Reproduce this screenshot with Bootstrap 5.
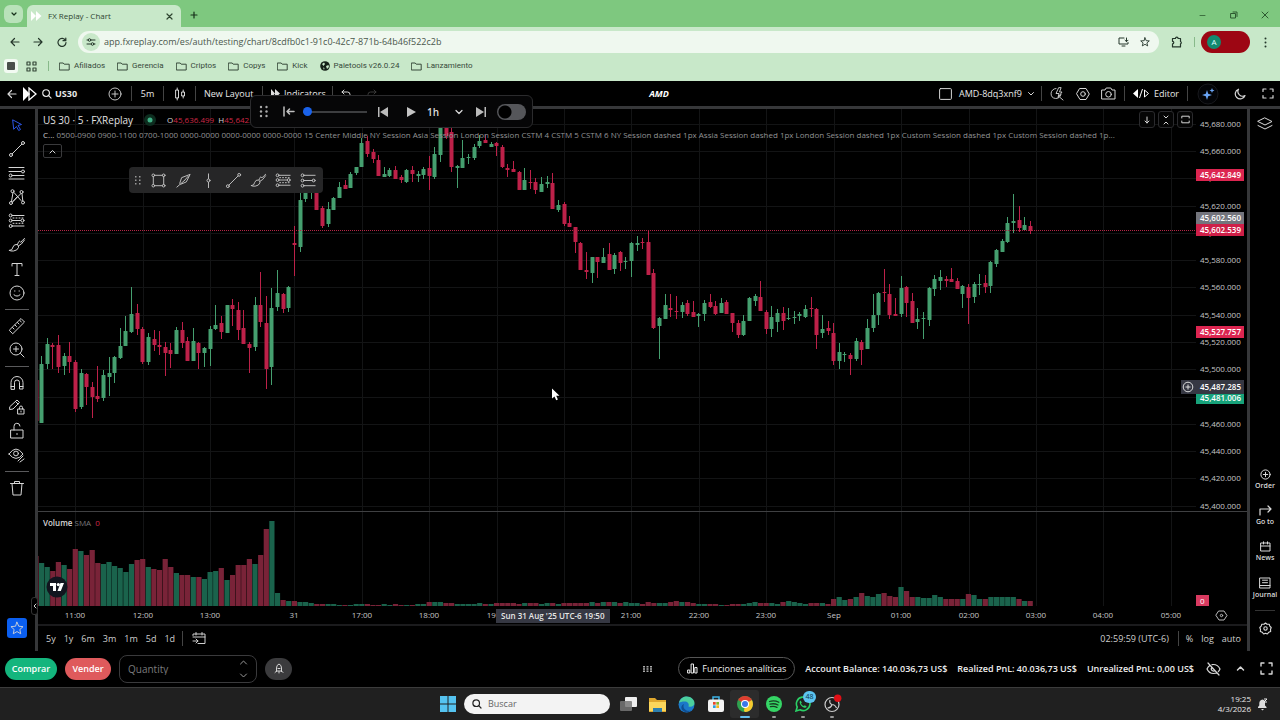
<!DOCTYPE html>
<html lang="es">
<head>
<meta charset="utf-8">
<meta name="viewport" content="width=device-width, initial-scale=1">
<title>FX Replay - Chart</title>
<link href="https://cdn.jsdelivr.net/npm/bootstrap@5.3.0/dist/css/bootstrap.min.css" rel="stylesheet">
<style>
:root{--edge:#363739;--rule:#3a3b3d;--ink:#d6d6d6;--soft:#8f9092;--up:#459f6f;--down:#bd2149}
html,body{background:#000}
body{font:400 8px/12px "Open Sans","Noto Sans",sans-serif;color:var(--ink);overflow-x:hidden}
button,input{font:inherit;color:inherit}
button{background:none;border:0;padding:0}
a{color:inherit;text-decoration:none}
svg{display:block;flex:none}
.ic{fill:none;stroke:currentColor;stroke-linecap:round;stroke-linejoin:round}
.cell{display:flex;align-items:center;justify-content:center;flex:none}
.w16{width:16px}.w20{width:20px}.w24{width:24px}.w26{width:26px}.w31{width:31px}.w32{width:32px}
.fs9{font-size:9px}.fs10{font-size:10px}
/* browser */
.tabs{height:27px;background:#7ec87f;color:#16301a}
.tabmenu{width:19px;height:18px;border-radius:6px;background:#b9e2ba}
.tab-on{width:154px;height:22px;background:#c8e8c9;border-radius:6px 6px 0 0;color:#2f4531}
.chrome{background:#c8e8c9;color:#24362a}
.urlbar{height:22px;border-radius:11px;background:#eff8ef}
.urlbar input{background:none;border:0;outline:0;padding:0;color:#4a574c;font-size:9px}
.site{width:18px;height:18px;border-radius:9px;background:#c8e8c9}
.profile{width:49px;height:22px;border-radius:11px;background:#9d0613}
.avatar{width:14px;height:14px;border-radius:7px;background:#13896f;color:#dff;font-size:8px}
.bar-v{width:1px;height:10px;background:#88b98a}
.marks{height:28px;padding-bottom:2px;font-family:Roboto,"Open Sans",sans-serif}
.marks a{color:#37493a}
/* app */
.apptop{height:28px;border-bottom:3px solid var(--edge);background:#000}
.sep{width:1px;height:15px;background:#444;flex:none}
.strong{font-weight:500;color:#e8e8e8}
.replay{left:250px;top:95px;width:283px;height:33px;background:#060607;border:1px solid #2b2b2d;border-radius:6px;z-index:5;color:#bfbfbf}
.replay input[type=range]{appearance:none;width:64px;height:9px;background:linear-gradient(#3d3e40,#3d3e40) center/100% 2px no-repeat;margin:0 4px 0 2px}
.replay input[type=range]::-webkit-slider-thumb{appearance:none;width:9px;height:9px;border-radius:5px;background:#1a62ea}
.flip{appearance:none;width:29px;height:16px;border-radius:8px;background:radial-gradient(circle at 8px 8px,#000 0 6px,transparent 7px) #55565a;margin:0}
.lefttools{width:38px;border-right:3px solid var(--edge)}
.lefttools button{width:34px;height:24px;display:flex;align-items:center;justify-content:center}
.lefttools hr,.righttools hr{height:1px;border:0;background:#5a5a5c;opacity:1;margin:4px 0 4px 5px;width:24px}
.righttools hr{width:20px;background:#333}
.starbtn{background:#0b5ff0;border-radius:3px;width:20px!important;height:20px!important;margin:auto 0 13px 7px}
.handle{left:31px;bottom:36px;width:7px;height:18px;background:#000;border:1px solid #333;border-radius:3px;z-index:3}
.righttools{width:33px;border-left:3px solid var(--edge)}
.righttools button{width:100%;height:36px;display:flex;flex-direction:column;align-items:center;color:#dadada;font-size:7px;line-height:9px;font-weight:600;gap:1px;padding-top:7px}
.plot{height:515px;overflow:hidden}
.axis{width:51px}
.plot text,.axis text{font-size:8px;fill:#c6c6c7}
.legend{left:5px;top:4px;right:62px}
.session{font-size:8px;color:#929395}
.redtx{color:#cf2847}
.foldbtn{width:19px;height:14px;border:1px solid #3a3a3c;border-radius:2px}
.chips{right:3px;top:2px;gap:3px}
.chips button{width:16px;height:17px;border:1px solid #2a2a2d;border-radius:3px;background:#050505;display:flex;align-items:center;justify-content:center}
.drawbar{left:91px;top:58px;width:194px;height:26px;background:#262627;border-radius:4px;color:#c4c4c4}
.tvlogo{left:8px;top:467px}
.pane{left:5px;top:408px}
.ranges{border-top:2px solid #1b1b1d;height:27px;font-size:9px;font-weight:500;color:#cfcfcf}
.trade{height:36px;padding:0 4px 1px 5px;font-size:9px}
.trade>span{color:#eee;font-weight:600}
.pill{height:22px;border-radius:11px;font-weight:600;color:#fff}
.qty{width:138px;height:28px;border:1px solid #3a3a3c;border-radius:8px}
.qty input{background:none;border:0;outline:0;width:90px;font-size:10px;padding:0}
.qty input::placeholder{color:#7b7b7d;opacity:1}
.ghost{height:23px;border:1px solid #555;border-radius:12px;width:117px}
.taskbar{height:33px;background:#202020;border-top:1px solid #3c3c3c}
.find{width:146px;height:20px;border-radius:10px;background:#f3f3f3;color:#222}
.find input{background:none;border:0;outline:0;width:100px;padding:0;font-size:9px}
.find input::placeholder{color:#666;opacity:1}
.app{width:29px;height:28px;display:flex;align-items:center;justify-content:center;position:relative}
.app::after{content:"";position:absolute;bottom:0;width:4px;height:2px;border-radius:1px;background:transparent}
.run::after{background:#999}
.act::after{background:#62bdec;width:10px}
.act{background:#2c2c2c;border-radius:3px}
</style>
</head>
<body>
<div class="d-flex flex-column min-vh-100 position-relative">
<header>
  <div class="tabs d-flex align-items-end">
    <button class="tabmenu cell ms-1 mb-1" aria-label="Buscar pestañas"><svg class="ic" width="8" height="8" viewBox="0 0 8 8" stroke-width="1.200"><path d="M2 3l2 2 2-2"/></svg></button>
    <div class="tab-on d-flex align-items-center ms-1 px-1">
      <svg width="11" height="10" viewBox="0 0 11 10" fill="#fff"><path d="M0 0l5 5-5 5z"/><path d="M5 0l5.500 5L5 10z"/></svg>
      <span class="flex-grow-1" style="margin-left:6px">FX Replay - Chart</span>
      <button class="cell w16" aria-label="Cerrar"><svg class="ic" width="7" height="7" viewBox="0 0 7 7" stroke-width="1.200"><path d="M1 1l5 5M6 1L1 6"/></svg></button>
    </div>
    <button class="cell w26 mb-2" aria-label="Nueva pestaña"><svg class="ic" width="8" height="8" viewBox="0 0 8 8" stroke-width="1.200"><path d="M4 1v6M1 4h6"/></svg></button>
    <div class="d-flex ms-auto mb-2 align-items-center" style="color:#2d5a30">
      <button class="cell w31" aria-label="Minimizar"><svg class="ic" width="7" height="7" viewBox="0 0 7 7" stroke-width=".8"><path d="M1 3.500h5"/></svg></button>
      <button class="cell w31" aria-label="Restaurar"><svg class="ic" width="8" height="8" viewBox="0 0 8 8"><path d="M1 2.500h4.500V7H1zM3 1h4v4.500"/></svg></button>
      <button class="cell w31" aria-label="Salir"><svg class="ic" width="8" height="8" viewBox="0 0 8 8"><path d="M1 1l6 6M7 1L1 7"/></svg></button>
    </div>
  </div>
  <div class="chrome">
    <div class="d-flex align-items-center pt-1 ps-1">
      <button class="cell" style="width:22px" aria-label="Atrás"><svg class="ic" width="10" height="10" viewBox="0 0 10 10" stroke-width="1.200"><path d="M9 5H1M4.500 1.500L1 5l3.500 3.500"/></svg></button>
      <button class="cell w24" aria-label="Adelante"><svg class="ic" width="10" height="10" viewBox="0 0 10 10" stroke-width="1.200"><path d="M1 5h8M5.500 1.500L9 5 5.500 8.500"/></svg></button>
      <button class="cell w24" aria-label="Recargar"><svg class="ic" width="10" height="10" viewBox="0 0 10 10" stroke-width="1.200"><path d="M8.500 3.500A4 4 0 1 0 9 5.500M8.800 1v2.700H6"/></svg></button>
      <div class="urlbar d-flex align-items-center flex-grow-1 ms-1" style="padding:0 4px">
        <span class="site cell"><svg class="ic" width="10" height="10" viewBox="0 0 10 10"><path d="M1 3h1M5.500 3H9M1 7h3.500M8 7h1"/><circle cx="3.500" cy="3" r="1.300"/><circle cx="6.500" cy="7" r="1.300"/></svg></span>
        <input class="flex-grow-1 ms-1" aria-label="Dirección" value="app.fxreplay.com/es/auth/testing/chart/8cdfb0c1-91c0-42c7-871b-64b46f522c2b">
        <button class="cell w24" aria-label="Instalar"><svg class="ic" width="11" height="10" viewBox="0 0 11 10"><path d="M6 1H1v6h9V5.500M4 9h3M8.500 1v3.500M7 3.200l1.500 1.500L10 3.200"/></svg></button>
        <button class="cell w20" aria-label="Favorito"><svg class="ic" width="10" height="10" viewBox="0 0 10 10" stroke-width=".9"><path d="M5 .8l1.200 2.900 3.100.2-2.400 2 .8 3L5 7.300 2.300 8.900l.8-3-2.400-2 3.100-.2z"/></svg></button>
      </div>
      <button class="cell w32" style="margin:0 1px 0 2px" aria-label="Extensiones"><svg class="ic" width="12" height="12" viewBox="0 0 12 12" stroke-width="1.200"><path d="M1.500 2.500h3a1.300 1.300 0 0 1 2.600 0h2.400v3a1.300 1.300 0 0 1 0 2.400v3h-8v-3a1.300 1.300 0 0 0 0-2.600z"/></svg></button>
      <span class="bar-v" style="margin-right:6px"></span>
      <button class="profile d-flex align-items-center px-2" style="padding-left:6px!important" aria-label="Perfil"><span class="avatar cell">A</span></button>
      <button class="cell w24" style="margin:0 3px" aria-label="Menú"><svg width="3" height="11" viewBox="0 0 3 11" fill="#24362a"><circle cx="1.500" cy="1.500" r="1"/><circle cx="1.500" cy="5.500" r="1"/><circle cx="1.500" cy="9.500" r="1"/></svg></button>
    </div>
    <nav class="marks d-flex align-items-center ps-1" id="marks">
      <span class="cell"><svg width="14" height="14" viewBox="0 0 14 14"><rect width="14" height="14" rx="3" fill="#f2faf2"/><rect x="3" y="3" width="8" height="8" rx="1" fill="#4a4f4b"/></svg></span>
      <a href="#" class="cell w26 me-1" aria-label="Aplicaciones"><svg class="ic" width="11" height="11" viewBox="0 0 11 11" stroke-width="1.200"><path d="M1 1h3v3H1zM7 1h3v3H7zM1 7h3v3H1zM7 7h3v3H7z"/></svg></a>
      <span class="bar-v" style="margin-right:7px"></span>
    </nav>
  </div>
</header>

<div class="apptop d-flex align-items-center">
  <button class="cell w20" style="margin-left:2px;margin-right:1px" aria-label="Volver"><svg class="ic" width="10" height="10" viewBox="0 0 10 10" stroke-width="1.200"><path d="M9 5H1M4.500 1.500L1 5l3.500 3.500"/></svg></button>
  <svg style="margin-right:5px" width="14" height="14" viewBox="0 0 14 14"><path d="M0 0l7 7-7 7z" fill="#fff"/><path d="M6 1l7 6-7 6z" fill="none" stroke="#fff" stroke-width="1.300"/></svg>
  <button class="d-flex align-items-center fs9 strong" style="width:60px"><svg class="ic" width="10" height="10" viewBox="0 0 11 11" stroke-width="1.200"><circle cx="4.500" cy="4.500" r="3.700"/><path d="M7.300 7.300L10 10"/></svg><span class="fw-bold" style="margin-left:3px">US30</span></button>
  <button class="cell w26" aria-label="Comparar"><svg class="ic" width="14" height="14" viewBox="0 0 14 14" stroke-width=".9"><circle cx="7" cy="7" r="6"/><path d="M7 4v6M4 7h6"/></svg></button>
  <span class="sep" style="margin-left:3px"></span><button class="cell w31 fs9 strong">5m</button>
  <span class="sep"></span><button class="cell w31" aria-label="Velas"><svg class="ic" width="12" height="14" viewBox="0 0 12 14"><path d="M2 3h2.500v8H2zM3.200 1v2M3.200 11v2M8 5h2.500v4H8zM9.200 3v2M9.200 9v2"/></svg></button>
  <span class="sep me-2"></span><button class="fs9 strong text-nowrap" style="width:58px;text-align:left">New Layout</button>
  <span class="sep"></span>
  <button class="d-flex align-items-center fs9 strong ps-2" style="width:69px"><svg width="9" height="9" viewBox="0 0 9 9" fill="#ddd"><path d="M0 0l4 4.500L0 9zM4 0l5 4.500L4 9z"/></svg><span class="ms-1">Indicators</span></button>
  <span class="sep"></span>
  <button class="cell w26" aria-label="Deshacer"><svg class="ic" width="10" height="9" viewBox="0 0 10 9"><path d="M3 1L1 3l2 2M1 3h5.500a2.500 2.500 0 0 1 0 5"/></svg></button>
  <button class="cell w26" aria-label="Rehacer" style="color:#3a3a3a"><svg class="ic" width="10" height="9" viewBox="0 0 10 9"><path d="M7 1l2 2-2 2M9 3H3.500a2.500 2.500 0 0 0 0 5"/></svg></button>
  <div class="flex-grow-1 text-center fs9 fst-italic fw-bold text-white">AMD</div>
  <button class="cell w26" aria-label="Diseño"><svg class="ic" width="13" height="12" viewBox="0 0 13 12"><rect x=".6" y=".6" width="11.800" height="10.800" rx="1"/></svg></button>
  <button class="fs9 strong">AMD-8dq3xnf9</button>
  <button class="cell" style="width:19px" aria-label="Más"><svg class="ic" width="8" height="6" viewBox="0 0 8 6"><path d="M1.500 1.500L4 4l2.500-2.500"/></svg></button>
  <span class="sep"></span>
  <button class="cell w31" aria-label="Búsqueda rápida"><svg class="ic" width="14" height="14" viewBox="0 0 14 14" stroke-width=".9"><path d="M6 1.500a5 5 0 1 0 5 6M9.500 10L13 13M8.500 1L6 6.500h3l-1 4L12 5H9.500L11 1z"/></svg></button>
  <button class="cell w20" aria-label="Ajustes"><svg class="ic" width="14" height="14" viewBox="0 0 14 14"><path d="M4 1.500h6L13.300 7 10 12.500H4L.7 7z"/><circle cx="7" cy="7" r="2.300"/></svg></button>
  <button class="cell w31" aria-label="Captura"><svg class="ic" width="15" height="13" viewBox="0 0 15 13"><path d="M1 3h3l1.200-2h4.600L11 3h3v9H1z"/><circle cx="7.500" cy="7.300" r="2.800"/></svg></button>
  <span class="sep me-1"></span>
  <button class="d-flex align-items-center fs9 strong mx-1"><svg class="me-1" width="17" height="9" viewBox="0 0 17 9"><path d="M5 0v9L0 4.500z" fill="#fff"/><path d="M9.500 0L6.500 9M11.500 1v7l4-3.500z" fill="none" stroke="#fff"/></svg>Editor</button>
  <span class="sep mx-1"></span>
  <button class="cell w32" aria-label="Asistente"><svg width="22" height="22" viewBox="0 0 22 22"><circle cx="11" cy="11" r="10" fill="#030407" stroke="#17181c"/><path d="M10 7l1.200 3.800L15 12l-3.800 1.200L10 17l-1.200-3.800L5 12l3.800-1.200z" fill="#6aa5f5"/><path d="M15 5l.7 1.800 1.800.7-1.800.7L15 10l-.7-1.800-1.800-.7 1.800-.7z" fill="#6aa5f5"/></svg></button>
  <button class="cell w32" aria-label="Tema"><svg class="ic" width="12" height="12" viewBox="0 0 12 12" stroke-width="1.200"><path d="M4.500 1.200A5 5 0 1 0 11 7.500 4.700 4.700 0 0 1 4.500 1.200z"/></svg></button>
  <button class="cell w24" aria-label="Pantalla completa"><svg class="ic" width="12" height="11" viewBox="0 0 12 11" stroke-width="1.200"><path d="M1 3.500V1h3M8 1h3v2.500M11 7.500V10H8M4 10H1V7.500"/></svg></button>
</div>

<div class="replay position-absolute d-flex align-items-center">
  <span class="cell w26"><svg width="10" height="13" viewBox="0 0 10 13" fill="#aaa"><circle cx="2" cy="2" r="1.200"/><circle cx="2" cy="6.500" r="1.200"/><circle cx="2" cy="11" r="1.200"/><circle cx="7.500" cy="2" r="1.200"/><circle cx="7.500" cy="6.500" r="1.200"/><circle cx="7.500" cy="11" r="1.200"/></svg></span>
  <button class="cell w24" aria-label="Ir al inicio"><svg class="ic" width="12" height="11" viewBox="0 0 12 11" stroke-width="1.500"><path d="M1 1v9M11 5.500H4M6.500 3L4 5.500 6.500 8"/></svg></button>
  <input type="range" aria-label="Velocidad" min="0" max="100" value="0">
  <button class="cell w24" aria-label="Anterior"><svg width="10" height="10" viewBox="0 0 10 10" fill="#bbb"><path d="M0 0h1.500v10H0zM10 0v10L2 5z"/></svg></button>
  <button class="cell w32" aria-label="Reproducir"><svg width="9" height="10" viewBox="0 0 9 10" fill="#c4c4c4"><path d="M0 0v10l9-5z"/></svg></button>
  <button class="d-flex align-items-center justify-content-between fs10 fw-semibold" style="width:36px;color:#ddd">1h<svg class="ic" width="8" height="6" viewBox="0 0 8 6" stroke-width="1.200"><path d="M1 1.500l3 3 3-3"/></svg></button>
  <button class="cell w32" style="margin-left:2px" aria-label="Siguiente"><svg width="10" height="10" viewBox="0 0 10 10" fill="#bbb"><path d="M8.500 0H10v10H8.500zM0 0v10l8-5z"/></svg></button>
  <input type="checkbox" class="flip" aria-label="Modo">
</div>

<main class="d-flex flex-grow-1 position-relative">
  <aside class="lefttools d-flex flex-column pt-1 flex-shrink-0" id="tools"></aside>
  <div class="handle position-absolute cell"><svg class="ic" width="4" height="6" viewBox="0 0 4 6" stroke-width="1"><path d="M3 1L1 3l2 2"/></svg></div>

  <section class="d-flex flex-column flex-grow-1" style="min-width:0">
    <div class="d-flex">
      <div class="plot position-relative flex-grow-1" style="min-width:0">
        <svg id="chart" width="100%" height="515"></svg>
        <div class="legend position-absolute">
          <div class="d-flex align-items-center" style="height:13px">
            <span class="fs10" style="color:#e2e2e2;font-weight:500">US 30 · 5 · FXReplay</span>
            <svg style="margin-left:11px" width="12" height="12" viewBox="0 0 12 12"><circle cx="6" cy="6" r="6" fill="#0d2d1f"/><circle cx="6" cy="6" r="2.500" fill="#3fae84"/></svg>
            <span class="ms-2" style="padding-left:3px">O<span class="redtx">45,636.499</span>&nbsp; H<span class="redtx">45,642.849</span></span>
          </div>
          <div class="session text-nowrap text-truncate" style="line-height:11px;margin-top:3px"><span style="color:#ccc">C...</span>&nbsp;0500-0900 0900-1100 0700-1000 0000-0000 0000-0000 0000-0000 15 Center Middle NY Session Asia Session London Session CSTM 4 CSTM 5 CSTM 6 NY Session dashed 1px Assia Session dashed 1px London Session dashed 1px Custom Session dashed 1px Custom Session dashed 1p...</div>
          <button class="foldbtn cell mt-1" aria-label="Plegar"><svg class="ic" width="7" height="5" viewBox="0 0 7 5"><path d="M1 4l2.500-2.500L6 4"/></svg></button>
        </div>
        <div class="chips position-absolute d-flex">
          <button aria-label="Bajar"><svg class="ic" width="8" height="8" viewBox="0 0 8 8"><path d="M4 1v6M2 5l2 2 2-2"/></svg></button>
          <button aria-label="Plegar panel"><svg class="ic" width="8" height="10" viewBox="0 0 8 10" stroke-width="1"><path d="M2 1l2 2 2-2M2 9l2-2 2 2"/></svg></button>
          <button aria-label="Maximizar"><svg class="ic" width="9" height="9" viewBox="0 0 9 9" stroke-width="1"><path d="M.8 3V1.200h7.400V3M.8 6v1.800h7.400V6"/></svg></button>
        </div>
        <div class="drawbar position-absolute d-flex align-items-center" id="drawbar"></div>
        <div class="pane position-absolute"><span class="fw-semibold">Volume</span> <span style="color:#77787a">SMA</span>&nbsp; <span class="redtx">0</span></div>
        <svg class="tvlogo position-absolute" width="22" height="22" viewBox="0 0 22 22"><circle cx="11" cy="11" r="10.500" fill="#12151f"/><path d="M4 7h6v8H7v-5H4zM14.500 7H18l-3.200 8h-3.300z" fill="#fff"/><circle cx="12.300" cy="8.600" r="1.600" fill="#fff"/></svg>
      </div>
      <svg id="axis" class="axis" height="515"></svg>
    </div>
    <div class="ranges d-flex align-items-center">
      <div class="d-flex ps-2" id="rg"></div>
      <span class="sep" style="margin-left:7px"></span>
      <button class="cell w31" aria-label="Ir a fecha"><svg class="ic" width="14" height="13" viewBox="0 0 14 13" stroke-width="1"><path d="M1 3.500V2h12v9.500H6M1 5h12M4 .5V3M10 .5V3M1 9h5M4 7l2 2-2 2"/></svg></button>
      <span class="ms-auto" style="margin-right:9px">02:59:59 (UTC-6)</span><span class="sep"></span>
      <button style="margin-left:7px">%</button><button style="margin-left:8px">log</button><button style="margin:0 6px 0 8px">auto</button>
    </div>
  </section>

  <aside class="righttools d-flex flex-column flex-shrink-0">
    <button aria-label="Capas" style="height:30px;padding-top:8px"><svg class="ic" width="16" height="14" viewBox="0 0 16 14"><path d="M8 1l7 3.500L8 8 1 4.500zM1 8.500L8 12l7-3.500"/></svg></button>
    <div class="mt-auto">
    <button><svg class="ic" width="11" height="11" viewBox="0 0 11 11" stroke-width="1"><circle cx="5.500" cy="5.500" r="4.600"/><path d="M5.500 3.300v4.400M3.300 5.500h4.400"/></svg>Order</button>
    <button><svg class="ic" width="13" height="11" viewBox="0 0 13 11" stroke-width="1.200"><path d="M1 10V4h11M9 1l3 3-3 3"/></svg>Go to</button>
    <button><svg class="ic" width="11" height="11" viewBox="0 0 11 11" stroke-width="1"><path d="M1 2h9v8H1zM1 5h9M3.500 .8V3M7.500 .8V3"/></svg>News</button>
    <button><svg class="ic" width="12" height="12" viewBox="0 0 12 12" stroke-width="1"><path d="M1 1h10v10H1zM1 8.500h10M3.500 3.200h5M3.500 5.700h5"/></svg>Journal</button>
    <hr>
    <button aria-label="Configuración"><svg class="ic" width="13" height="13" viewBox="0 0 13 13" stroke-width="1.100"><path d="M6.500 1l1.500 1.200 2.200 0 .6 2 1.400 1.300L11.500 7.500l.2 2-2 .8L8.300 12l-1.800-.8-1.800.8-1.400-1.700-2-.8.2-2L.8 5.500l1.400-1.300.6-2 2.200 0z"/><circle cx="6.500" cy="6.500" r="1.700"/></svg></button>
    </div>
  </aside>
</main>

<div class="trade d-flex align-items-center">
  <button class="pill cell" style="width:52px;background:#14b57d">Comprar</button>
  <button class="pill cell ms-2" style="width:46px;background:#df5a5c">Vender</button>
  <div class="qty d-flex align-items-center justify-content-between ms-2 px-2"><input aria-label="Quantity" placeholder="Quantity"><svg class="ic" width="9" height="20" viewBox="0 0 9 20" style="color:#999"><path d="M1.500 5l3-3 3 3M1.500 15l3 3 3-3"/></svg></div>
  <button class="cell ms-2" style="width:27px;height:22px;border-radius:11px;background:#3b3b3d" aria-label="Alerta"><svg class="ic" width="10" height="11" viewBox="0 0 10 11"><path d="M2.500 8.500V5Q2.500 2 5 1q2.500 1 2.500 4v3.500M1 9.500l1.500-1.500h5L9 9.500M5 8.500v1.500M4 5.500h2"/></svg></button>
  <span class="cell ms-auto"><svg width="9" height="6" viewBox="0 0 9 6" fill="#aaa"><path d="M0 0h2v1.500H0zM3.500 0h2v1.500h-2zM7 0h2v1.500H7zM0 2.300h2v1.500H0zM3.500 2.300h2v1.500h-2zM7 2.300h2v1.500H7zM0 4.500h2V6H0zM3.500 4.500h2V6h-2zM7 4.500h2V6H7z"/></svg></span>
  <button class="ghost cell" style="margin-left:26px;color:#eee"><svg class="ic me-1" width="11" height="11" viewBox="0 0 11 11" stroke-width="1"><path d="M1 7h1.800v3H1zM4.500 1h2v9h-2zM8.200 4.500H10V10H8.200z"/></svg>Funciones analíticas</button>
  <span style="margin-left:10px">Account Balance: 140.036,73 US$</span>
  <span style="margin-left:10px">Realized PnL: 40.036,73 US$</span>
  <span style="margin-left:10px">Unrealized PnL: 0,00 US$</span>
  <button class="cell ms-2" style="width:23px" aria-label="Ocultar"><svg class="ic" width="15" height="14" viewBox="0 0 15 14" stroke-width="1.200"><path d="M2 1l11 12M4 3.200Q2 4.500 1 7q2 4.500 6.500 4.500 1.800 0 3.300-1M6 2.600Q11.500 1.800 14 7q-.6 1.500-1.700 2.600M6 5.500a2 2 0 0 0 2.800 3"/></svg></button>
  <button class="cell w31" aria-label="Expandir"><svg class="ic" width="9" height="7" viewBox="0 0 9 7" stroke-width="1.500"><path d="M1.500 5l3-3 3 3"/></svg></button>
  <button class="cell w20" aria-label="Pantalla completa"><svg class="ic" width="13" height="13" viewBox="0 0 13 13" stroke-width="1.400"><path d="M1 4V1h3M9 1h3v3M12 9v3H9M4 12H1V9"/></svg></button>
</div>

<footer class="taskbar d-flex align-items-center position-relative">
  <div class="d-flex align-items-center mx-auto" style="padding-left:6px">
    <button class="cell me-2" aria-label="Inicio"><svg width="16" height="16" viewBox="0 0 16 16" fill="#55c3f0"><path d="M0 0h7.500v7.500H0zM8.500 0H16v7.500H8.500zM0 8.500h7.500V16H0zM8.500 8.500H16V16H8.500z"/></svg></button>
    <label class="find d-flex align-items-center px-2"><svg class="ic" style="margin-right:6px" width="10" height="10" viewBox="0 0 10 10" stroke-width="1.200"><circle cx="4.200" cy="4.200" r="3.300"/><path d="M6.700 6.700L9 9"/></svg><input placeholder="Buscar" aria-label="Buscar"></label>
    <button class="app ms-1" aria-label="Vista de tareas"><svg width="17" height="15" viewBox="0 0 17 15"><rect x="5" width="12" height="10" rx="1" fill="#eee"/><rect y="4" width="12" height="10" rx="1" fill="#777" opacity=".85"/></svg></button>
    <button class="app" aria-label="Archivos"><svg width="17" height="15" viewBox="0 0 17 15"><path d="M0 1h6l2 2h9v12H0z" fill="#e0a82e"/><path d="M0 5h17v9H0z" fill="#fbd65b"/><path d="M4 11h9v4H4z" fill="#2d7fae"/></svg></button>
    <button class="app" aria-label="Edge"><svg width="17" height="17" viewBox="0 0 17 17"><circle cx="8.500" cy="8.500" r="8" fill="#1b78c9"/><path d="M1 7C2 2 6 .5 8.500.5c5 0 8 3.500 8 6.500 0 3-3 4.500-6 3.500 1-3-1-5-4-5C4 5.500 2 6 1 7z" fill="#4ccf9d"/><path d="M6 8c-2 4 2 8 7 6.500-2 2-5 2.200-7 1C2 13 3 9 6 8z" fill="#0f4f93"/></svg></button>
    <button class="app" aria-label="Tienda"><svg width="16" height="16" viewBox="0 0 16 16"><path d="M5 4V1h6v3" fill="none" stroke="#3bb2e6" stroke-width="1.500"/><rect y="3.500" width="16" height="12.500" rx="2" fill="#f3f3f3"/><path d="M5 6h2.700v2.700H5z" fill="#e8492b"/><path d="M8.300 6H11v2.700H8.300z" fill="#7db72f"/><path d="M5 9.300h2.700V12H5z" fill="#2a9fe0"/><path d="M8.300 9.300H11V12H8.300z" fill="#f6b71b"/></svg></button>
    <button class="app act" aria-label="Chrome"><svg width="16" height="16" viewBox="0 0 16 16"><circle cx="8" cy="8" r="8" fill="#2fa24f"/><path d="M8 8L1.100 4A8 8 0 0 1 14.900 4z" fill="#df3e30"/><path d="M8 8l6.900-4A8 8 0 0 1 8 16l-1-1z" fill="#f8c92f"/><circle cx="8" cy="8" r="4" fill="#fff"/><circle cx="8" cy="8" r="3" fill="#3a77e8"/></svg></button>
    <button class="app run" aria-label="Spotify"><svg width="16" height="16" viewBox="0 0 16 16"><circle cx="8" cy="8" r="8" fill="#35d565"/><path d="M3.500 5.500q5-1.500 9.300.8M4 8.200q4.200-1.200 8 .8M4.500 10.700q3.500-1 6.500.7" fill="none" stroke="#173d22" stroke-width="1.300" stroke-linecap="round"/></svg></button>
    <button class="app run" aria-label="WhatsApp"><svg width="16" height="16" viewBox="0 0 16 16"><path d="M1 15l1.200-4A6.800 6.800 0 1 1 5 13.800z" fill="none" stroke="#2ad066" stroke-width="1.600"/><path d="M5.500 4.500l1.300 2-.8 1q1 2 2.800 2.600l1-.9 1.900 1.200q-.5 1.800-2.300 1.400Q5.500 10.500 4.600 6.500q0-1.500.9-2z" fill="#2ad066"/></svg><span class="position-absolute rounded-pill text-center" style="right:1px;top:1px;width:13px;height:12px;background:#5cc4f0;color:#0b3448;font-size:7px;line-height:12px">48</span></button>
    <button class="app run" aria-label="OBS"><svg width="20" height="20" viewBox="0 0 20 20"><circle cx="10" cy="10.500" r="7" fill="#1c1c1c" stroke="#ccc" stroke-width="1.200"/><path d="M10 10.500q-3-1-2-4.500M10 10.500q3 0 4.500 3.500M10 10.500q-1 3.500-4.500 3.500" fill="none" stroke="#ccc" stroke-width="1.200"/><circle cx="15.700" cy="4.200" r="3.700" fill="#e00f16"/></svg></button>
  </div>
  <div class="position-absolute end-0 d-flex align-items-center pe-2" style="color:#e8e8e8;padding-right:12px!important"><div class="text-end" style="line-height:10px;margin-right:6px">19:25<br>4/3/2026</div><svg width="11" height="13" viewBox="0 0 11 13"><path d="M1 10V9l1.300-1.500V5Q2.500 2 5.500 1.500 7 1.600 8 3v4.500L9.500 9v1z" fill="#ddd"/><path d="M4 11h3l-1.500 1.500z" fill="#ddd"/><path d="M7 1h3L7 4h3" stroke="#eee" fill="none"/></svg></div>
</footer>
</div>

<script src="https://cdn.jsdelivr.net/npm/bootstrap@5.3.0/dist/js/bootstrap.bundle.min.js"></script>
<script>
const icon=(d,w=1,s=18)=>`<svg class="ic" width="${s}" height="${s}" viewBox="0 0 18 18" stroke-width="${w}">${d}</svg>`;
const c=(x,y,r=1.500)=>`<circle cx="${x}" cy="${y}" r="${r}"/>`;
const P=d=>`<path d="${d}"/>`;
const I={
 cursor:`<g style="color:#2c55e6" stroke="#2c55e6">${P('M5 4l8.500 4.500-3.500 1 2.500 4-1.800 1-2.300-4L6 13z')}</g>`,
 line:P('M4.200 13.800l9.600-9.600')+c(3,15)+c(15,3),
 fib:P('M1 3.500h15M1 7.500h12M4.500 11.500H16M1 15h15')+c(15,7.500)+c(2.700,11.500),
 patt:P('M3.500 13.500L5 4.500M6 4.500l7 8M5 13.500l8-8M14 5.500l.8 7.500M4.500 14L9 9')+c(4.500,3.200)+c(13.500,4)+c(3,15)+c(15,14.500),
 proj:P('M4.500 3.500H16M4.500 8.500h8M4.500 14H16')+c(2.700,3.500)+c(2.700,8.500)+c(14.500,8.500)+c(2.700,14)+`<path d="M5 6h11M5 11.300h11" stroke-dasharray="1 2"/>`,
 proj2:P('M4.500 3.500H16M4.500 9h8.500M4.500 14.500H16')+c(2.700,3.500)+c(2.700,9)+c(14.500,9)+c(2.700,14.500),
 brush:P('M1.500 14.500q3 0 3.500-3.500 1-3 4-2.500 2 1 1.500 3-1 3-5 3.500-3 .3-4-.5zM9.500 8.500Q11 4 12 5.500t1 .5q1-1.500 3.500-3.500M10.500 10q3-1 6-6'),
 text:P('M4 6V3.500h10V6M9 3.500v12M7 15.500h4'),
 face:c(9,9,7)+P('M6 10.800q3 2.800 6 0M6.800 6.800v.4M11.200 6.800v.4'),
 ruler:P('M1.500 13L13 1.500 16.500 5 5 16.500zM4.500 10.500l1.500 1.500M7 8l1.500 1.500M9.500 5.500L11 7M12 3.500L13.200 5'),
 zoom:c(8,8,6)+P('M12.500 12.500L16 16M8 5.500v5M5.500 8h5'),
 magnet:P('M3 15V8.500a6 6 0 0 1 12 0V15h-3.500V8.500a2.500 2.500 0 0 0-5 0V15zM3 12.500h3.500M11.500 12.500H15'),
 penlock:P('M2 8.500L9 2l2.500 2.500L5 11l-3 .5zM7.500 3.500L10 6M10 11h6v5h-6zM11.500 11V9.500a1.500 1.500 0 0 1 3 0V11M13 13v1'),
 lock:P('M3 8h12v8H3zM6 8V4.500a3 3 0 0 1 6-.5M9 11.500v1'),
 eye:P('M1 8q7-10 14 0-7 9-14 0zM10 15l5-5M12 16l4-3')+c(8,7.500,2.400),
 trash:P('M2.500 4.500h13M6.500 4.500v-2h5v2M4 4.500L5 16h8l1-11.500'),
 star:P('M9 2.500l2 4.500 4.800.5-3.600 3.200 1 4.800L9 13l-4.200 2.500 1-4.800L2.200 7.500 7 7z'),
 box:P('M5 3.500h8M5 14.500h8M3.500 5v8M14.500 5v8')+c(3.500,3.500,1.400)+c(14.500,3.500,1.400)+c(3.500,14.500,1.400)+c(14.500,14.500,1.400),
 arrow:P('M2 16l8-7M5 12l2-6 9-3.500-4 8-6 2.500M10 9l4-4.500'),
 cross:P('M9 2v5M9 11v5.500')+c(9,9,1.600)
};
document.getElementById('tools').innerHTML=['cursor','line','fib','patt','proj','brush','text','face','-','ruler','zoom','-','magnet','penlock','lock','eye','-','trash']
 .map(n=>n==='-'?'<hr>':`<button aria-label="${n}">${icon(I[n])}</button>`).join('')+`<button class="starbtn" aria-label="star">${icon(I.star,1,16)}</button>`;
document.getElementById('drawbar').innerHTML=`<svg style="margin:0 4px 0 6px" width="7" height="9" viewBox="0 0 7 9" fill="#999"><path d="M0 0h1.500v1.500H0zM4 0h1.500v1.500H4zM0 3.500h1.500V5H0zM4 3.500h1.500V5H4zM0 7h1.500v1.500H0zM4 7h1.500v1.500H4z"/></svg>`+
 ['box','arrow','cross','line','brush','proj','proj2'].map(n=>`<button class="cell" style="width:25px" aria-label="${n}">${icon(I[n],1,17)}</button>`).join('');
document.getElementById('rg').style.gap='8px';
document.getElementById('rg').innerHTML=['5y','1y','6m','3m','1m','5d','1d'].map(t=>`<button>${t}</button>`).join('');
document.getElementById('marks').insertAdjacentHTML('beforeend',['Afiliados','Gerencia','Criptos','Copys','Kick','Paletools v26.0.24','Lanzamiento'].map(t=>
 `<a href="#" class="d-flex align-items-center text-nowrap" style="margin:0 9px 0 3px">${t[0]==='P'
 ?'<svg width="10" height="10" viewBox="0 0 10 10"><circle cx="5" cy="5" r="4.800" fill="#152018"/><path d="M2 3l2-1.500L5 3 3.500 5zM6 5l2.500-1L9 6 7 8zM3 6.500l1.500.5L4 9z" fill="#c8e8c9"/></svg>'
 :'<svg class="ic" width="11" height="9" viewBox="0 0 11 9" stroke-width="1"><path d="M.7 1h3.500l1 1.200h5V8H.7z"/></svg>'}<span style="margin-left:4px">${t}</span></a>`).join(''));

/* one row per 5-minute bar: colour, high, body top, body bottom, low (screen rows) */
const bars=`r380,380,421,421 g356,364,423,423 g338,344,364,369 r343,345,347,369 r335,345,367,373 g353,356,366,375 r342,356,362,373
r360,362,409,412 g369,373,407,409 r373,374,387,405 r382,387,397,418 r366,396,399,402 g370,375,398,401 g357,373,377,396 g356,357,373,383 g328,346,358,359 g316,331,346,346 g287,314,332,333 r304,313,329,335
r327,329,362,364 g333,337,362,365 r330,339,345,351 r331,345,347,355 r342,347,353,376 r343,350,354,368 g327,330,354,354 r322,330,343,348 r337,341,361,361 g328,341,361,361 r342,343,353,369 g347,348,353,367
g326,329,349,366 g305,325,329,330 r316,323,332,339 g305,305,333,333 r299,305,309,326 r302,310,330,340 r310,328,344,344 r342,344,348,373 g297,305,347,351 r272,305,322,327 r296,323,369,389 g288,308,367,385 g270,293,307,311 r293,294,309,313 g286,287,308,312
r226,243,245,276 g190,200,247,252 g188,190,199,202 g180,186,192,199 r180,186,210,210 r206,208,226,228 g202,209,224,227 g197,198,210,210 g182,187,198,198 r180,185,189,189 g172,174,188,188 g167,167,173,175
g138,143,167,167 r136,141,154,157 r149,152,159,163 r155,160,176,176 g167,174,177,177 g168,170,176,177 r166,170,179,179 r175,177,180,183 g169,170,182,183 r166,170,174,182 g171,174,176,182 g167,169,175,179
r156,168,176,190 g147,154,177,179 g120,125,155,162 r120,125,136,139 r128,132,167,172 g165,166,168,188 g140,158,168,168 g154,157,158,164 g144,147,158,160 g135,141,146,148 r135,140,143,143 g142,144,147,147 r142,143,146,156 r145,147,167,168 r164,168,170,177
r161,169,172,172 r171,172,190,190 g168,180,190,190 r170,182,183,189 r178,182,190,194 g177,184,192,192 g176,182,184,188 r173,183,209,209 g200,205,210,212 r202,204,224,226 r216,223,227,227 r227,227,242,253 r242,243,270,270 r252,270,272,279 g257,257,273,283 r257,257,262,278 g248,257,263,263
r243,254,270,270 g253,255,269,274 r251,252,263,271 g257,261,262,269 g242,243,261,277 g236,243,245,251 r238,242,243,249 r231,242,275,275 r269,273,328,329 g317,318,326,359 g294,305,319,319 r294,308,310,317 r296,311,312,319 g302,305,312,318 r300,303,314,316 r301,312,317,317
g313,314,316,327 g300,303,314,321 r294,302,307,308 r301,306,314,315 g298,303,313,313 r300,302,314,314 r313,313,323,332 r320,323,335,338 g315,321,335,336 g297,298,321,321 g294,296,301,306 r281,297,311,311 r310,312,329,334 g306,317,329,337 g309,313,322,332 r307,313,321,330 g308,318,319,320
g311,317,318,324 g312,314,316,321 g305,309,317,318 r297,308,309,317 r308,309,335,349 g315,329,333,338 r321,328,331,335 r323,333,361,365 g343,352,361,369 g352,354,355,362 r353,355,359,375 g338,341,359,361 r340,342,350,365 g319,328,349,349 g294,315,328,332 g292,293,315,325 r269,292,293,302
r284,294,315,319 r298,314,316,316 g276,288,314,317 r286,287,303,317 r293,301,323,323 g308,319,322,329 g312,318,319,339 g287,288,320,326 g275,279,289,296 g270,277,281,290 r276,279,281,287 r268,279,282,282 r278,281,289,289 g285,286,294,308 r284,287,298,324 g282,284,297,303 g274,284,285,295 r275,283,287,293
g261,262,286,293 g249,250,264,267 g239,241,252,252 g217,223,242,243 g194,221,223,233 r206,220,228,232 g217,225,230,230 r221,226,231,234`.trim().split(/\s+/);
const vol=[50,43,39,35,44,41,37,57,55,51,56,43,42,44,40,38,34,42,46,47,39,37,36,47,39,33,31,31,29,29,27,34,35,38,26,31,41,41,47,42,51,77,85,13,6,5,
5,4,4,3,2,2,2,2,1,1,1,2,2,2,1,1,2,1,2,1,1,1,2,2,4,4,4,3,3,2,2,2,2,3,2,2,3,3,3,3,2,3,3,3,2,3,3,2,3,3,3,3,3,4,3,4,4,4,3,4,3,3,2,4,3,3,3,4,5,4,4,3,2,2,2,2,1,1,2,2,2,3,4,3,3,3,2,4,5,4,3,2,3,3,3,2,
7,9,6,7,9,13,10,9,12,13,10,9,19,15,9,9,8,8,11,9,7,7,7,7,12,11,7,7,9,9,9,9,9,7,5,5];
const STEP=5.617,X0=75.4-38,TOP=109,BASE=497,GRID='#131415';
const X=k=>X0+STEP*k;
const hours=[['11:00',0],['12:00',12],['13:00',24],['31',39],['17:00',51],['18:00',63],['19:00',75],['',87],['21:00',99],['22:00',111],['23:00',123],['Sep',135],['01:00',147],['02:00',159],['03:00',171],['04:00',183],['05:00',195]];
let s='';
for(const[,k]of hours)s+=`<path d="M${Math.round(X(k))+.5} 0V${BASE}" stroke="${GRID}"/>`;
for(let i=0;i<15;i++)s+=`<rect y="${Math.round(14.7+27.28*i)}" width="100%" height="1" fill="${GRID}"/>`;
const off=vol.length-bars.length;
bars.forEach((b,i)=>{
 const up=b[0]==='g',[h,t,d,l]=b.slice(1).split(',').map(Number),x=X(i-7),col=up?'var(--up)':'var(--down)';
 const v=vol[i<135?i:i+off]||3;
 s+=`<rect x="${(x-2.700).toFixed(1)}" y="${BASE-v}" width="5.200" height="${v}" fill="${up?'#1a634c':'#792338'}"/>`;
 s+=`<rect x="${Math.round(x-.5)}" y="${h-TOP}" width="1" height="${Math.max(1,l-h)}" fill="${col}"/><rect x="${Math.round(x-.5)-1.500}" y="${t-TOP}" width="4" height="${Math.max(1,d-t)}" rx=".5" fill="${col}"/>`;
});
s+=`<line x1="0" x2="100%" y1="121.500" y2="121.500" stroke="#b52545" stroke-dasharray="1 1"/>`;
s+=`<rect x="0" y="402" width="100%" height="1" fill="#3f4042"/>`;
for(const[t,k]of hours)s+=`<text x="${X(k).toFixed(0)}" y="509" text-anchor="middle">${t}</text>`;
s+=`<rect x="458" y="500" width="114" height="14" fill="#363843"/><text x="463" y="510" style="fill:#e6e6e6;font-weight:600">Sun 31 Aug '25 UTC-6</text><text x="546" y="510" style="fill:#e6e6e6;font-weight:600">19:50</text>`;
s+=`<path d="M514 279.500v10l2.500-2 1.700 3.800 1.700-.8-1.700-3.700h3.300z" fill="#fff"/>`;
s+='<svg x="100%" y="271" width="1" height="14" overflow="visible"><rect x="-15" width="15" height="14" fill="#363843"/><circle cx="-8" cy="7" r="4.800" fill="none" stroke="#ddd"/><path d="M-8 4.500v5M-10.500 7h5" stroke="#ddd"/></svg>';
document.getElementById('chart').innerHTML=s;
let a='<rect y="402" width="51" height="1" fill="#3f4042"/>';
for(let i=0;i<15;i++)if(i!==10)a+=`<text x="4" y="${Math.round(17.7+27.28*i)}">${(45680-20*i).toLocaleString('en-US')}.000</text>`;
const tag=(y,h,f,t)=>`<rect x="-1" y="${y}" width="49" height="${h}" fill="${f}"/><text x="4" y="${y+h/2+3}" style="fill:#fff;font-weight:600">${t}</text>`;
a+=tag(60,12,'#dc2550','45,642.849')+tag(103,12,'#74757d','45,602.560')+tag(115,12,'#cf1f48','45,602.539')+tag(217,12,'#dc2550','45,527.757')+tag(283,12,'#17a27a','45,481.006')+tag(271,14,'#363843','45,487.285');
a+=`<rect x="-1" y="486" width="14" height="11" fill="#d93a60"/><text x="4" y="495" style="fill:#fff">0</text>`;
a+=`<g class="ic" style="stroke:#b9b9ba;stroke-width:1"><path d="M23 502h5l3 4.500-3 4.500h-5l-3-4.500z"/><circle cx="25.500" cy="506.500" r="1.200"/></g>`;
document.getElementById('axis').innerHTML=a;
</script>
</body>
</html>
